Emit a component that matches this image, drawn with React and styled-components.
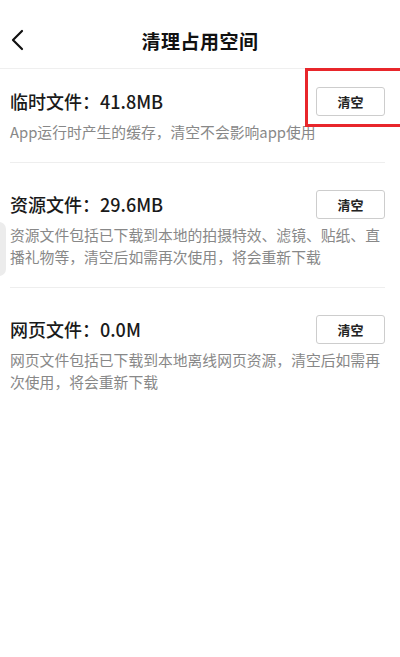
import React from "react";
import styled, { createGlobalStyle } from "styled-components";

const GlobalStyle = createGlobalStyle`
  body {
    margin: 0;
    background: #fff;
    font-family: "Noto Sans CJK SC", "Noto Sans", sans-serif;
  }
`;

const Page = styled.div`
  position: relative;
  width: 400px;
  height: 657px;
  overflow: hidden;
  background: #fff;
`;

const Header = styled.div`
  height: 68px;
  display: flex;
  align-items: center;
  justify-content: center;
  position: relative;
  border-bottom: 1px solid #efefef;
`;

const BackButton = styled.div`
  position: absolute;
  left: 10px;
  top: 29px;
  width: 18px;
  height: 22px;
  display: flex;
  align-items: center;
`;

const Title = styled.div`
  font-size: 19px;
  font-weight: 700;
  color: #111;
  padding-top: 12px;
  letter-spacing: 0.5px;
`;

const List = styled.div`
  display: flex;
  flex-direction: column;
  padding: 0 15px 0 10px;
`;

const Item = styled.div`
  padding: ${({ $first }) => ($first ? "18px" : "27px")} 0 19px;
  border-bottom: ${({ $last }) => ($last ? "none" : "1px solid #eeeeee")};
`;

const Row = styled.div`
  display: flex;
  align-items: center;
  justify-content: space-between;
  height: 29px;
`;

const Name = styled.div`
  font-size: 18px;
  font-weight: 500;
  color: #1a1a1a;
  margin-top: -2px;
`;

const ClearButton = styled.button`
  width: 69px;
  height: 29px;
  border: 1px solid #cdcdcd;
  border-radius: 3px;
  background: #fff;
  font-family: inherit;
  font-size: 13px;
  font-weight: 700;
  color: #222;
  padding: 0;
`;

const Desc = styled.div`
  margin-top: 5px;
  font-size: 14.8px;
  line-height: 22px;
  color: #888888;
`;

const Highlight = styled.div`
  position: absolute;
  left: 305px;
  top: 68px;
  width: 110px;
  height: 59px;
  border: 3px solid #e8262b;
  box-sizing: border-box;
`;

const SideHandle = styled.div`
  position: absolute;
  left: -8px;
  top: 222px;
  width: 14px;
  height: 54px;
  border-radius: 8px;
  background: #ececec;
`;

const items = [
  {
    name: "临时文件：41.8MB",
    desc: "App运行时产生的缓存，清空不会影响app使用",
  },
  {
    name: "资源文件：29.6MB",
    desc: "资源文件包括已下载到本地的拍摄特效、滤镜、贴纸、直播礼物等，清空后如需再次使用，将会重新下载",
  },
  {
    name: "网页文件：0.0M",
    desc: "网页文件包括已下载到本地离线网页资源，清空后如需再次使用，将会重新下载",
  },
];

const App = () => {
  return (
    <Page>
      <GlobalStyle />
      <Header>
        <BackButton>
          <svg width="14" height="22" viewBox="0 0 14 22">
            <polyline
              points="12,2 3,11 12,20"
              fill="none"
              stroke="#111"
              strokeWidth="2.2"
              strokeLinecap="round"
              strokeLinejoin="round"
            />
          </svg>
        </BackButton>
        <Title>清理占用空间</Title>
      </Header>
      <List>
        {items.map((item, i) => (
          <Item key={item.name} $first={i === 0} $last={i === items.length - 1}>
            <Row>
              <Name>{item.name}</Name>
              <ClearButton>清空</ClearButton>
            </Row>
            <Desc>{item.desc}</Desc>
          </Item>
        ))}
      </List>
      <Highlight />
      <SideHandle />
    </Page>
  );
};

export default App;
